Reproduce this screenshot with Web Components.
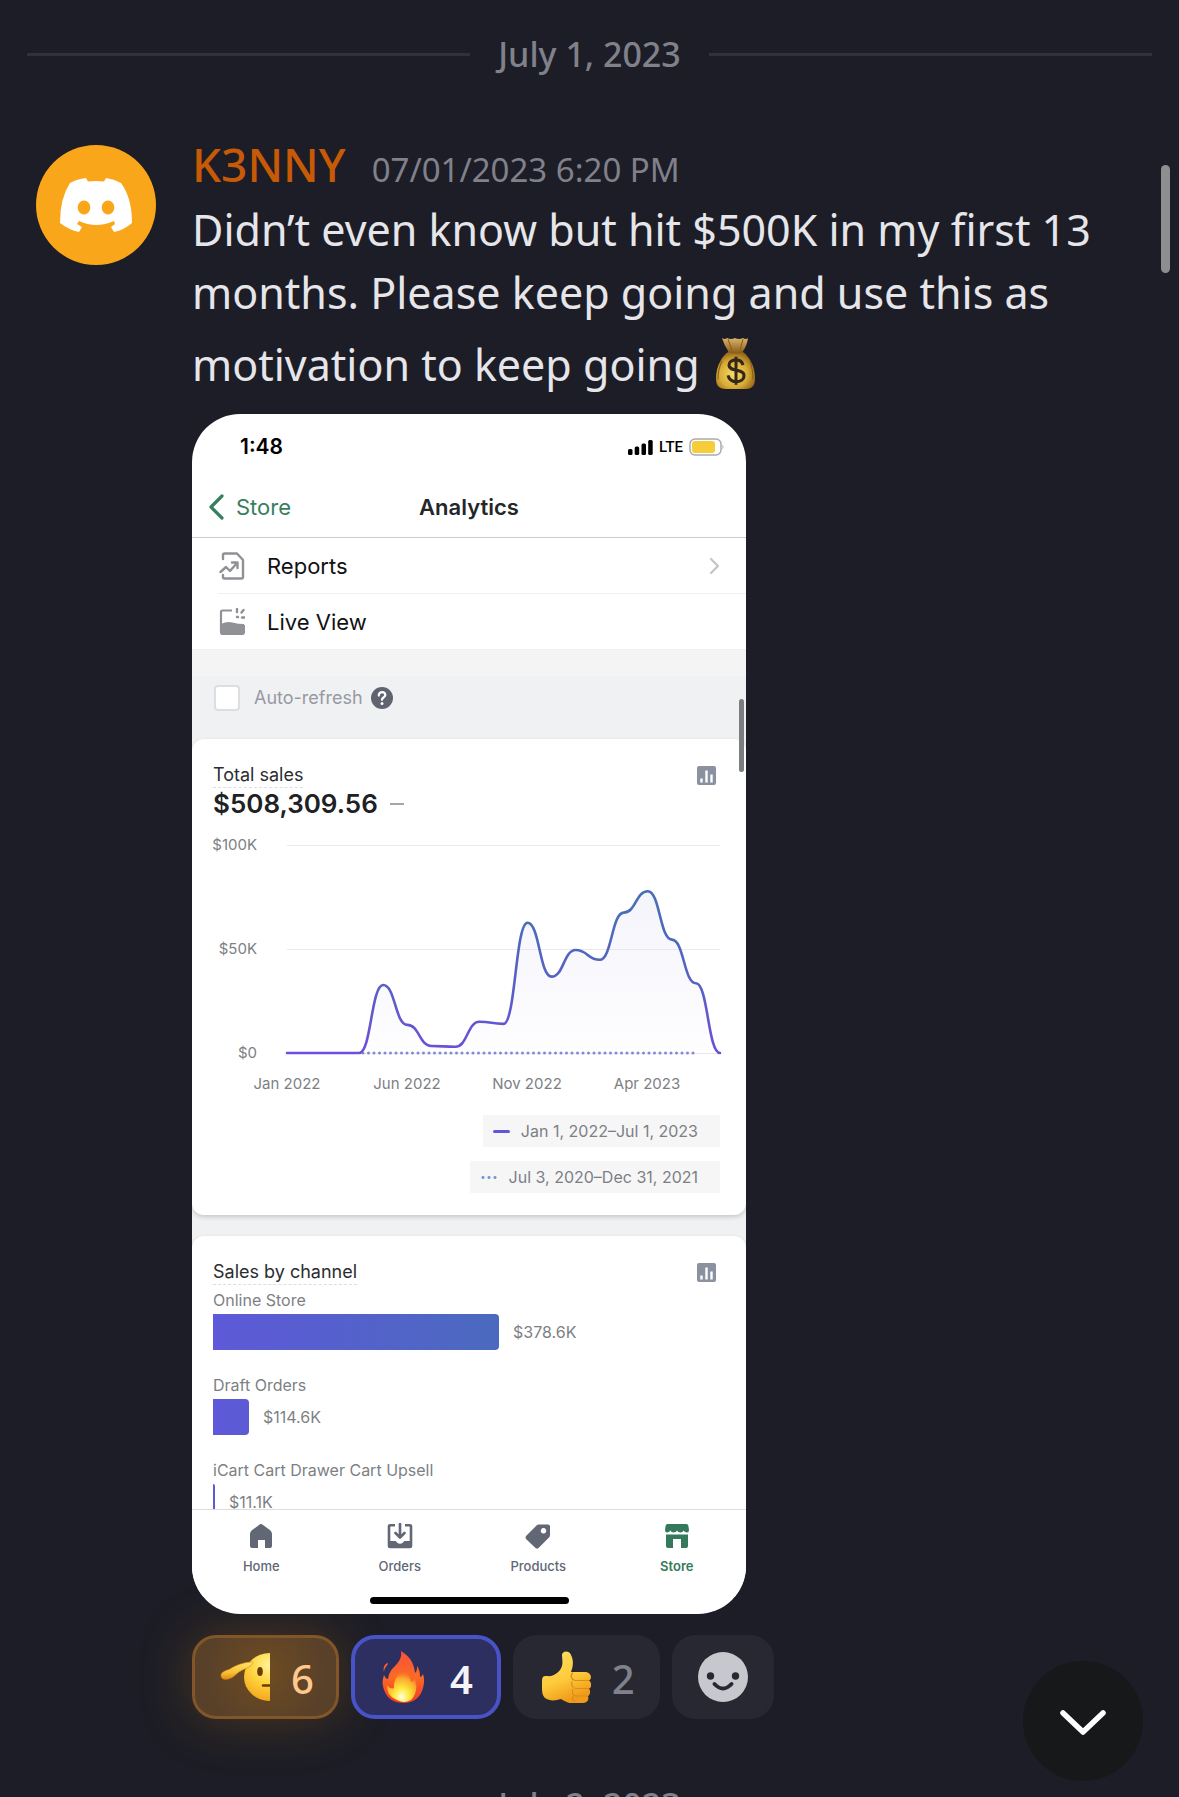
<!DOCTYPE html>
<html lang="en">
<head>
<meta charset="utf-8">
<meta name="viewport" content="width=device-width, initial-scale=1">
<title>Chat</title>
<style>
  body { margin: 0; background: #1c1d26; }
</style>
</head>
<body>
<chat-view>
  <date-divider>July 1, 2023</date-divider>
  <chat-message author="K3NNY" time="07/01/2023 6:20 PM">
    <span slot="text">Didn’t even know but hit $500K in my first 13 months. Please keep going and use this as motivation to keep going <emoji-icon name="moneybag" class="inline"></emoji-icon></span>
    <phone-shot slot="attachment"></phone-shot>
    <reaction-pill slot="reactions" tone="super" emoji="salute" count="6"></reaction-pill>
    <reaction-pill slot="reactions" tone="mine" emoji="fire" count="4"></reaction-pill>
    <reaction-pill slot="reactions" emoji="thumb" count="2"></reaction-pill>
    <reaction-pill slot="reactions" tone="add" emoji="smiley"></reaction-pill>
  </chat-message>
  <date-divider>July 2, 2023</date-divider>
  <jump-button slot="overlay"></jump-button>
</chat-view>

<script>
const define = (name, html, setup) => {
  const tpl = document.createElement('template');
  tpl.innerHTML = html;
  customElements.define(name, class extends HTMLElement {
    connectedCallback() {
      if (this.shadowRoot) return;
      const root = this.attachShadow({ mode: 'open' });
      root.append(tpl.content.cloneNode(true));
      if (setup) setup(this, root);
    }
  });
};

/* ---------- icons ---------- */
const EMOJI = {
  moneybag: `<svg viewBox="0 0 50 52" preserveAspectRatio="none"><defs>
    <radialGradient id="g" cx=".45" cy=".6" r=".6"><stop offset="0" stop-color="#f6dc6a"/><stop offset=".6" stop-color="#d9ac35"/><stop offset="1" stop-color="#93651a"/></radialGradient>
    <linearGradient id="n" x2="0" y2="1"><stop offset="0" stop-color="#d9b469"/><stop offset="1" stop-color="#8f5f1e"/></linearGradient></defs>
    <path d="M11 2q3 2 5 0q4 2 8 0q4 2 8 0q3 2 5 0q-1 8-6 14H18Q13 9 11 2z" fill="url(#n)"/>
    <path d="M18 15h13c7 4 13 14 13 26c0 8-4 10-9 10H15C9 51 5 49 5 41C5 29 11 19 18 15z" fill="url(#g)"/>
    <path d="M17 15q8 3 15 0M11 24q-4 8-4 18M39 24q3 8 3 18M17 3l4 11M32 3l-3 11" fill="none" stroke="#8a5c18" stroke-width="1"/>
    <path d="M32 28c-1-4-4-5-7-5c-4 0-7 2-7 5c0 7 15 3 15 10c0 4-4 6-8 6s-7-2-8-6M25 20v27" fill="none" stroke="#33261a" stroke-width="3"/></svg>`,
  salute: `<svg viewBox="0 0 50 52"><defs>
    <radialGradient id="g" cx=".5" cy=".25" r=".85"><stop offset="0" stop-color="#fff49a"/><stop offset=".45" stop-color="#fed43e"/><stop offset="1" stop-color="#f59a16"/></radialGradient>
    <linearGradient id="h" x2="0" y2="1"><stop offset="0" stop-color="#ffe46c"/><stop offset=".6" stop-color="#fbc034"/><stop offset="1" stop-color="#e18a0f"/></linearGradient></defs>
    <ellipse cx="50" cy="26" rx="26" ry="24" fill="url(#g)"/>
    <ellipse cx="40" cy="20.500" rx="2.800" ry="4.500" fill="#6b3d05"/>
    <path d="M43 34.500h7" stroke="#6b3d05" stroke-width="2.400" stroke-linecap="round"/>
    <path d="M32 11C25 11 16 14 10 18C5 20 1 21 1 24.500c0 3.500 4 4.500 7 3.500c5-1 7-4 11-7c4-3 9-3.500 12-6.500c1.500-1.500 2.500-3.500 1-3.500z" fill="url(#h)" stroke="#d98a12" stroke-width=".6"/></svg>`,
  fire: `<svg viewBox="0 0 50 52"><defs>
    <linearGradient id="g" x2="0" y2="1"><stop offset="0" stop-color="#f8503a"/><stop offset=".5" stop-color="#fb6a26"/><stop offset="1" stop-color="#f33b22"/></linearGradient>
    <radialGradient id="c" cx=".5" cy=".85" r=".75"><stop offset="0" stop-color="#fffde0"/><stop offset=".35" stop-color="#fee93c"/><stop offset=".75" stop-color="#fca52c"/><stop offset="1" stop-color="#fb7a2a" stop-opacity="0"/></radialGradient></defs>
    <path d="M22 0c8 5 13 11 14 22c2-2 2-4 2-7c3 4 3 8 3 11c1 0 2-1 3-3c2 6 1 12-1 17c-3 8-10 12-18 12S9 49 6 41C3 34 3 30 5 24c1 2 2 4 4 4c1-5 2-8 6-12c5-5 8-9 7-16zM9 12c0 3-4 4-4 9c-1-4 0-8 4-9z" fill="url(#g)"/>
    <path d="M23 17c6 4 8 8 9 14c2-1 3-2 4-4c3 9 1 17-4 22q-7 4-14 0C11 46 8 42 8 34c3 4 5 4 7 3c-1-8 5-14 8-20z" fill="url(#c)"/></svg>`,
  thumb: `<svg viewBox="0 0 50 52"><defs>
    <linearGradient id="g" x1="0" y1="0" x2=".4" y2="1"><stop offset="0" stop-color="#ffdf66"/><stop offset=".6" stop-color="#fecb3c"/><stop offset="1" stop-color="#f09b19"/></linearGradient></defs>
    <path d="M1 34c0-8 0-9 5-9c7 1 13-4 15-10c1-4 0-8 0-11c0-4 7-5 9 0c3 6 2 12 0 17h15c6 1 6 7 3 8.500c3 2 3 7 0 8c2 2 1 7-1 7.500c1 3 0 7-5 7h-9c-6 1-9-2-13-4c-6 2-12 2-16-1c-3-3-3-7-3-13z" fill="url(#g)"/>
    <path d="M48 29.500H34c-4-1-5-5-2-8M48 37.500H35c-4 0-5-4-4-7M47 45H35c-4 0-4-4-3-7M34 51q-4-3-2-6" fill="none" stroke="#d98f1c" stroke-width="1.200"/></svg>`,
  smiley: `<svg viewBox="0 0 50 52"><circle cx="25" cy="26" r="25" fill="#c7c8ce"/><circle cx="12.500" cy="25" r="3.700" fill="#282832"/><circle cx="37.500" cy="25" r="3.700" fill="#282832"/><path d="M16.500 33q8.500 9 17 0" fill="none" stroke="#282832" stroke-width="4" stroke-linecap="round"/></svg>`
};
define('emoji-icon', `<style>
  :host { display: block; width: 50px; height: 52px; }
  :host(.inline) { display: inline-block; height: 54px; vertical-align: -9px; margin: 12px 0 0; }
  svg { display: block; width: 100%; height: 100%; }
</style>`, (el, root) => root.append(document.createRange().createContextualFragment(EMOJI[el.getAttribute('name')])));

const ICONS = {
  signal: `<svg width="25" height="15" viewBox="0 0 25 15"><rect y="9" width="4.500" height="6" rx="1.500"/><rect x="6.700" y="6.500" width="4.500" height="8.500" rx="1.500"/><rect x="13.500" y="3.500" width="4.500" height="11.500" rx="1.500"/><rect x="20.200" width="4.500" height="15" rx="1.500"/></svg>`,
  battery: `<svg width="36" height="18" viewBox="0 0 36 18"><rect x="1" y="1" width="31" height="16" rx="5" fill="#fff" stroke="#a9abb0" stroke-width="1.500"/><rect x="3" y="3" width="23" height="12" rx="3" fill="#f5cc3a"/><path d="M33.500 6.500q2 2.500 0 5z" fill="#a9abb0"/></svg>`,
  back: `<svg width="16" height="26" viewBox="0 0 16 26"><path d="M14 2L3 13l11 11" fill="none" stroke="currentColor" stroke-width="3.200" stroke-linecap="round" stroke-linejoin="round"/></svg>`,
  next: `<svg width="11" height="18" viewBox="0 0 11 18"><path d="M2 2l7 7l-7 7" fill="none" stroke="#c3c4c8" stroke-width="2.200" stroke-linecap="round" stroke-linejoin="round"/></svg>`,
  report: `<svg width="26" height="28" viewBox="0 0 26 28"><g fill="none" stroke="#8f9197" stroke-width="2.400" stroke-linecap="round" stroke-linejoin="round"><path d="M4 7V3q0-1.500 1.500-1.500H18L24 8v17q0 1.500-1.500 1.500h-17Q4 26.500 4 25v-2"/><path d="M1.500 20l5.500-5l4 4l7-8M13 10.500h5.500V16"/></g></svg>`,
  live: `<svg width="26" height="28" viewBox="0 0 26 28"><path d="M13 2.500H3.500q-1.500 0-1.500 1.500V24q0 2 2 2h19q2 0 2-2v-7" fill="none" stroke="#8f9197" stroke-width="2.200"/><path d="M2 16q6-3 11.500-1.500T25 16v9q0 2-2 2H4q-2 0-2-2z" fill="#8f9197"/><path d="M18 1v3M24.500 2l-2 2.500M18 9h1M23 9.500h2.500" stroke="#8f9197" stroke-width="2.400" stroke-linecap="round"/></svg>`,
  chart: `<svg width="19" height="19" viewBox="0 0 19 19"><rect width="19" height="19" rx="2" fill="#8b91a0"/><path d="M4.500 16.500v-4M9.500 16.500v-12M14.500 16.500v-8" stroke="#fff" stroke-width="2.400"/></svg>`,
  help: `<svg width="22" height="22" viewBox="0 0 22 22"><circle cx="11" cy="11" r="11" fill="#5f6470"/><path d="M7.800 8.500c0-4.600 6.800-4.200 6.500-.3c-.2 2.300-3.300 2.200-3.300 4.600" fill="none" stroke="#fff" stroke-width="2.300" stroke-linecap="round"/><circle cx="11" cy="16.500" r="1.500" fill="#fff"/></svg>`,
  home: `<svg width="24" height="24" viewBox="0 0 24 24"><path d="M12 0Q13 0 14 1l7.500 5.500Q23 8 23 10v12q0 2-2 2h-5v-8H9v8H3q-2 0-2-2V10q0-2 1.500-3.500L10 1q1-1 2-1z" fill="currentColor"/></svg>`,
  orders: `<svg width="26" height="26" viewBox="0 0 26 26"><path d="M8 2.200H3q-1 0-1 1V23q0 1 1 1h20q1 0 1-1V3.200q0-1-1-1h-5" fill="none" stroke="currentColor" stroke-width="2.600"/><path d="M2 18h6q1.500 0 2 1.500q3 2.500 6 0q.5-1.500 2-1.500h6v6H2z" fill="currentColor"/><path d="M13 1v13M8.500 10l4.500 4.500l4.500-4.500" fill="none" stroke="currentColor" stroke-width="2.600" stroke-linecap="round" stroke-linejoin="round"/></svg>`,
  products: `<svg width="26" height="25" viewBox="0 0 26 25"><path fill-rule="evenodd" d="M14 .5h9q2 0 2 2V11q0 1.500-1 2.500L13.500 24q-1.500 1-3 0L1 15q-1-1.500 0-3L11.500 1.500Q12.500.5 14 .5zM18.500 4a2.800 2.800 0 1 0 .01 0z" fill="currentColor"/></svg>`,
  store: `<svg width="24" height="24" viewBox="0 0 24 24"><path d="M2.500 0h19Q23 0 23.300 1.500L24 6q0 2.500-2 2.500q-2.500 0-3.300-2q-.8 2-3.300 2t-3.400-2q-.8 2-3.300 2t-3.400-2q-.8 2-3.300 2Q0 8.500 0 6L.7 1.500Q1 0 2.500 0z" fill="currentColor"/><path d="M1 10.500h22V22q0 2-2 2h-5v-9H8v9H3q-2 0-2-2z" fill="currentColor"/></svg>`
};
define('ui-icon', `<style>:host { display: inline-flex; flex: none; } svg { display: block; }</style>`,
  (el, root) => root.append(document.createRange().createContextualFragment(ICONS[el.getAttribute('name')])));

/* ---------- chat ---------- */
define('chat-view', `<style>
  :host { display: block; position: relative; height: 100vh; overflow: hidden; background: #1c1d26; color: #e6e6ea; font-family: "Noto Sans", sans-serif; }
  .thumb { position: absolute; right: 9px; top: 165px; width: 9px; height: 108px; border-radius: 5px; background: #8e8e90; }
</style><main><slot></slot></main><div class="thumb"></div><slot name="overlay"></slot>`);

define('date-divider', `<style>
  :host { display: flex; align-items: center; gap: 28px; padding: 31px 27px 0; color: #80818b; font-size: 34px; line-height: 46px; font-weight: 500; white-space: nowrap; }
  i { flex: 1; height: 3px; background: #30313a; }
</style><i></i><time><slot></slot></time><i></i>`);

define('chat-message', `<style>
  :host { display: flex; gap: 36px; padding: 59px 72px 32px 36px; }
  .avatar { flex: none; width: 120px; height: 120px; margin-top: 9px; border-radius: 50%; background: #faa61a; display: grid; place-items: center; }
  .body { flex: 1; min-width: 0; }
  header { display: flex; align-items: baseline; gap: 26px; height: 56px; line-height: 56px; }
  h2 { margin: 0; font-size: 46px; font-weight: 500; color: #c75a06; }
  time { font-size: 33px; font-weight: 400; color: #80818b; }
  p { margin: 6px 0 0; font-size: 43px; line-height: 63px; font-weight: 400; }
  .attach { margin-top: 18px; }
  .reactions { display: flex; gap: 12px; margin-top: 21px; }
</style>
<div class="avatar"><svg width="72" height="54" viewBox="0 0 72 54"><path fill="#fff" fill-rule="evenodd" d="M26 0Q17 1 10 5Q0 20 0 45Q9 52 19 54L22 49L17 46L19 43Q36 51 54 43L55 46L51 49L54 54Q64 52 72 45Q72 20 61 5Q54 1 46 0L44 3.500Q36 2.500 28 3.500zM24 22.500a6.300 7 0 1 0 .01 0zM48 22.500a6.300 7 0 1 0 .01 0z"/></svg></div>
<div class="body">
  <header><h2></h2><time></time></header>
  <p><slot name="text"></slot></p>
  <div class="attach"><slot name="attachment"></slot></div>
  <div class="reactions"><slot name="reactions"></slot></div>
</div>`, (el, root) => {
  root.querySelector('h2').textContent = el.getAttribute('author');
  root.querySelector('time').textContent = el.getAttribute('time');
});

define('reaction-pill', `<style>
  :host { display: block; }
  button { display: flex; align-items: center; gap: 21px; box-sizing: border-box; height: 84px; margin: 0; padding: 0 22px 0 25px; border: 3px solid #282832; border-radius: 24px; background: #282832; color: #80818b; font: 500 40px/48px "Noto Sans", sans-serif; }
  span { padding-top: 4px; }
  :host([tone="super"]) button { border-color: #835629; background: radial-gradient(circle at 50% 45%, #6f4c22, #584029 75%); color: #ffc88f; box-shadow: 0 0 54px 0 rgba(190, 115, 20, .3); }
  :host([tone="mine"]) button { padding: 0 24px; border: 4px solid #4853c8; background: #2d2f60; color: #f3f3f8; font-weight: 600; }
  :host([tone="add"]) button { padding: 0 23px; }
</style><button type="button"></button>`, (el, root) => {
  const icon = document.createElement('emoji-icon');
  icon.setAttribute('name', el.getAttribute('emoji'));
  const button = root.querySelector('button');
  const count = el.getAttribute('count');
  button.append(icon);
  if (count) { const s = document.createElement('span'); s.textContent = count; button.append(s); }
  else button.setAttribute('aria-label', 'Add reaction');
});

define('jump-button', `<style>
  :host { position: absolute; right: 36px; bottom: 16px; }
  button { display: grid; place-items: center; width: 120px; height: 120px; padding: 0; border: 0; border-radius: 50%; background: #17181a; }
</style><button type="button" aria-label="Jump to latest"><svg width="48" height="32" viewBox="0 0 48 32"><path d="M4 8l20 19L44 8" fill="none" stroke="#fff" stroke-width="5.500" stroke-linecap="round" stroke-linejoin="round"/></svg></button>`);

/* ---------- shared picture: store analytics app ---------- */
define('phone-shot', `<style>
  :host { display: flex; flex-direction: column; position: relative; width: 100%; max-width: 554px; aspect-ratio: 554 / 1200; border-radius: 48px; overflow: hidden; background: #fff; color: #111214; font-family: Inter, sans-serif; font-size: 16px; line-height: 20px; font-weight: 400; }
  .status { display: flex; align-items: center; box-sizing: border-box; height: 62px; padding: 4px 21px 0 48px; color: #000; }
  .status b { flex: 1; font-size: 21px; font-weight: 600; }
  .status span { margin: 0 6px; font: 500 15px/20px Roboto, sans-serif; }
  nav.top { display: grid; grid-template-columns: 1fr auto 1fr; align-items: center; box-sizing: border-box; height: 62px; padding: 0 16px; border-bottom: 1px solid #cbccce; font-size: 22px; line-height: 28px; }
  nav.top a { display: flex; align-items: center; gap: 12px; color: #37805f; text-decoration: none; }
  h1 { margin: 0; font-size: 22px; font-weight: 600; color: #25262a; }
  .scroll { flex: 1; min-height: 0; overflow: hidden; background: #eff1f3; }
  .toolbar { display: flex; align-items: center; gap: 14px; padding: 35px 22px 28px; background: linear-gradient(#f4f4f4 26px, #f0f1f3 26px); color: #9899a3; font-size: 18px; line-height: 26px; }
  input { appearance: none; box-sizing: border-box; width: 26px; height: 26px; margin: 0; border: 2px solid #dddee1; border-radius: 4px; background: #fff; }
  .toolbar ui-icon { margin-left: -6px; }
  metric-card + metric-card { margin-top: 21px; }
  .amount { display: flex; align-items: center; gap: 12px; font-size: 26px; font-weight: 600; line-height: 32px; color: #202124; }
  .amount i { width: 14px; height: 2px; background: #a5a6ab; }
  .indicator { position: absolute; right: 2px; top: 285px; width: 5px; height: 73px; border-radius: 3px; background: #7c7d80; }
  .tabs { display: grid; grid-template-columns: repeat(4, 1fr); padding: 14px 0 23px; border-top: 1px solid #dcdde0; background: #fff; }
  .tabs a { display: flex; flex-direction: column; align-items: center; gap: 10px; color: #616775; font-size: 13px; line-height: 16px; font-weight: 500; text-decoration: none; }
  .tabs ui-icon { height: 24px; align-items: center; }
  .tabs a[aria-current] { color: #35795c; font-weight: 600; }
  .bar { width: 199px; height: 7px; margin: 0 auto 10px; border-radius: 4px; background: #000; }
</style>
<div class="status"><b>1:48</b><ui-icon name="signal"></ui-icon><span>LTE</span><ui-icon name="battery"></ui-icon></div>
<nav class="top"><a href="#store"><ui-icon name="back"></ui-icon>Store</a><h1>Analytics</h1></nav>
<menu-row icon="report" more>Reports</menu-row>
<menu-row icon="live" last>Live View</menu-row>
<div class="scroll">
  <div class="toolbar"><input type="checkbox" id="auto"><label for="auto">Auto-refresh</label><ui-icon name="help"></ui-icon></div>
  <metric-card heading="Total sales">
    <div class="amount">$508,309.56 <i></i></div>
    <sales-chart values="0,0,0,0,32.7,13.5,3.4,3,15,14,62.6,36.7,49.5,44.8,67.5,77.8,54.5,33.5,0"></sales-chart>
  </metric-card>
  <metric-card heading="Sales by channel">
    <channel-bar label="Online Store" value="$378.6K" size="286"></channel-bar>
    <channel-bar label="Draft Orders" value="$114.6K" size="36"></channel-bar>
    <channel-bar label="iCart Cart Drawer Cart Upsell" value="$11.1K" size="2"></channel-bar>
  </metric-card>
</div>
<nav class="tabs">
  <a href="#home"><ui-icon name="home"></ui-icon>Home</a>
  <a href="#orders"><ui-icon name="orders"></ui-icon>Orders</a>
  <a href="#products"><ui-icon name="products"></ui-icon>Products</a>
  <a href="#store" aria-current="page"><ui-icon name="store"></ui-icon>Store</a>
</nav>
<div class="bar"></div>
<div class="indicator"></div>`);

define('menu-row', `<style>
  :host { display: flex; align-items: center; height: 56px; padding: 0 26px 1px 27px; box-sizing: border-box; background: linear-gradient(#f0f0f1, #f0f0f1) 26px 100% / 100% 1px no-repeat; font-size: 22px; line-height: 28px; }
  :host([last]) { background-position: 0 100%; }
  span { flex: 1; margin-left: 22px; }
</style><ui-icon></ui-icon><span><slot></slot></span>`, (el, root) => {
  const icon = document.createElement('ui-icon');
  icon.setAttribute('name', el.getAttribute('icon'));
  root.querySelector('ui-icon').replaceWith(icon);
  if (el.hasAttribute('more')) { const n = document.createElement('ui-icon'); n.setAttribute('name', 'next'); root.append(n); }
});

define('metric-card', `<style>
  :host { display: block; padding: 24px 26px 22px 21px; border-radius: 12px; background: #fff; box-shadow: 0 2px 4px rgba(60, 64, 70, .22); }
  header { display: flex; justify-content: space-between; align-items: center; }
  header ui-icon { margin-right: 4px; }
  h3 { margin: 0; border-bottom: 1px dashed #dddee1; font-size: 18px; line-height: 24px; font-weight: 400; color: #2c2d31; }
</style><header><h3></h3><ui-icon name="chart"></ui-icon></header><slot></slot>`,
  (el, root) => { root.querySelector('h3').textContent = el.getAttribute('heading'); });

define('sales-chart', `<style>
  :host { display: block; padding-top: 17px; color: #7d7f85; font-size: 15px; line-height: 16px; }
  .plot { display: grid; grid-template-columns: 44px 1fr; gap: 30px; }
  .y { display: flex; flex-direction: column; align-items: flex-end; justify-content: space-between; height: 224px; }
  svg { display: block; width: 100%; height: 224px; overflow: visible; }
  .x { display: grid; grid-template-columns: repeat(4, 120px); justify-content: end; margin: 13px 13px 21px 0; line-height: 20px; text-align: center; }
  .legend { display: flex; flex-direction: column; align-items: flex-end; gap: 14px; font-size: 16px; line-height: 32px; }
  .legend div { display: flex; align-items: center; gap: 11px; padding: 0 22px 0 10px; background: #f6f6f7; }
  .line { width: 17px; height: 3px; border-radius: 2px; background: #6257dc; }
  .dots { width: 18px; height: 3px; background: radial-gradient(circle, #7c93d2 1px, transparent 2px) 0 0 / 6px 3px; }
</style>
<div class="plot"><div class="y"><span>$100K</span><span>$50K</span><span>$0</span></div>
<svg viewBox="0 0 433 224" preserveAspectRatio="none">
  <defs>
    <linearGradient id="s" gradientUnits="userSpaceOnUse" x1="0" y1="54" x2="0" y2="216"><stop offset="0" stop-color="#4770b4"/><stop offset=".55" stop-color="#5561c4"/><stop offset="1" stop-color="#6c4fdb"/></linearGradient>
    <linearGradient id="f" x2="0" y2="1"><stop offset="0" stop-color="#f4f4fb"/><stop offset="1" stop-color="#fefeff"/></linearGradient>
  </defs>
  <path class="area" fill="url(#f)"/>
  <path d="M0 8.500h433M0 112.500h433M0 216.500h433" stroke="#e9e9ec" stroke-width="1"/>
  <path d="M76 216h332" stroke="#8289d8" stroke-width="3" stroke-linecap="round" stroke-dasharray="0 5.500"/>
  <path class="curve" fill="none" stroke="url(#s)" stroke-width="2.600" stroke-linecap="round"/>
</svg></div>
<div class="x"><span>Jan 2022</span><span>Jun 2022</span><span>Nov 2022</span><span>Apr 2023</span></div>
<div class="legend"><div><i class="line"></i>Jan 1, 2022–Jul 1, 2023</div><div><i class="dots"></i>Jul 3, 2020–Dec 31, 2021</div></div>`, (el, root) => {
  const v = el.getAttribute('values').split(',').map(Number);
  const step = 433 / (v.length - 1), y = n => 216 - n * 2.08;
  let d = `M0 ${y(v[0])}`;
  for (let i = 1; i < v.length; i++) {
    const x0 = (i - 1) * step, x1 = i * step, h = step / 2;
    d += `C${x0 + h} ${y(v[i - 1])} ${x1 - h} ${y(v[i])} ${x1} ${y(v[i])}`;
  }
  root.querySelector('.curve').setAttribute('d', d);
  root.querySelector('.area').setAttribute('d', d + 'V216H0z');
});

define('channel-bar', `<style>
  :host { display: block; padding: 5px 0 20px; color: #7d7f85; font-size: 16px; line-height: 20px; }
  .row { display: flex; align-items: center; gap: 14px; height: 36px; margin-top: 4px; }
  i { height: 36px; border-radius: 0 4px 4px 0; background: linear-gradient(90deg, #5e59d8, #4b6abf) 0 0 / 286px 100%; }
</style><div class="label"></div><div class="row"><i></i><span></span></div>`, (el, root) => {
  root.querySelector('.label').textContent = el.getAttribute('label');
  root.querySelector('span').textContent = el.getAttribute('value');
  root.querySelector('i').style.width = el.getAttribute('size') + 'px';
});
</script>
</body>
</html>
